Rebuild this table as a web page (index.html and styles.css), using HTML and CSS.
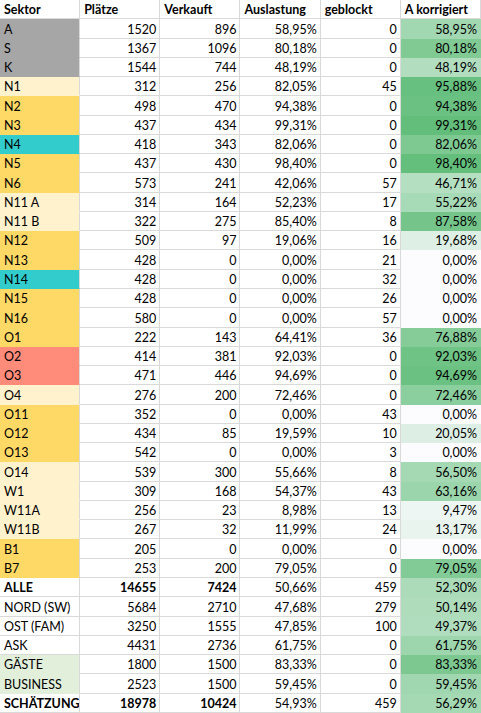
FILE: index.html
```html
<!DOCTYPE html>
<html lang="de">
<head>
<meta charset="utf-8">
<title>Sektoren</title>
<link rel="stylesheet" href="styles.css">
</head>
<body>
<div class="sheet">
  <div class="c b">Sektor</div><div class="c b">Plätze</div><div class="c b">Verkauft</div><div class="c b">Auslastung</div><div class="c b">geblockt</div><div class="c b">A korrigiert</div>

  <div class="c gray">A</div><div class="c n">1520</div><div class="c n">896</div><div class="c n">58,95%</div><div class="c n">0</div><div class="c n g" style="background:rgb(161,215,177)">58,95%</div>
  <div class="c gray">S</div><div class="c n">1367</div><div class="c n">1096</div><div class="c n">80,18%</div><div class="c n">0</div><div class="c n g" style="background:rgb(129,202,148)">80,18%</div>
  <div class="c gray">K</div><div class="c n">1544</div><div class="c n">744</div><div class="c n">48,19%</div><div class="c n">0</div><div class="c n g" style="background:rgb(178,222,191)">48,19%</div>
  <div class="c ly">N1</div><div class="c n">312</div><div class="c n">256</div><div class="c n">82,05%</div><div class="c n">45</div><div class="c n g" style="background:rgb(104,192,128)">95,88%</div>
  <div class="c yl">N2</div><div class="c n">498</div><div class="c n">470</div><div class="c n">94,38%</div><div class="c n">0</div><div class="c n g" style="background:rgb(107,193,130)">94,38%</div>
  <div class="c yl">N3</div><div class="c n">437</div><div class="c n">434</div><div class="c n">99,31%</div><div class="c n">0</div><div class="c n g" style="background:rgb(99,190,123)">99,31%</div>
  <div class="c teal">N4</div><div class="c n">418</div><div class="c n">343</div><div class="c n">82,06%</div><div class="c n">0</div><div class="c n g" style="background:rgb(126,201,146)">82,06%</div>
  <div class="c yl">N5</div><div class="c n">437</div><div class="c n">430</div><div class="c n">98,40%</div><div class="c n">0</div><div class="c n g" style="background:rgb(100,191,124)">98,40%</div>
  <div class="c yl">N6</div><div class="c n">573</div><div class="c n">241</div><div class="c n">42,06%</div><div class="c n">57</div><div class="c n g" style="background:rgb(180,223,193)">46,71%</div>
  <div class="c ly">N11 A</div><div class="c n">314</div><div class="c n">164</div><div class="c n">52,23%</div><div class="c n">17</div><div class="c n g" style="background:rgb(167,218,182)">55,22%</div>
  <div class="c ly">N11 B</div><div class="c n">322</div><div class="c n">275</div><div class="c n">85,40%</div><div class="c n">8</div><div class="c n g" style="background:rgb(117,197,139)">87,58%</div>
  <div class="c yl">N12</div><div class="c n">509</div><div class="c n">97</div><div class="c n">19,06%</div><div class="c n">16</div><div class="c n g" style="background:rgb(222,240,229)">19,68%</div>
  <div class="c yl">N13</div><div class="c n">428</div><div class="c n">0</div><div class="c n">0,00%</div><div class="c n">21</div><div class="c n g" style="background:rgb(252,252,255)">0,00%</div>
  <div class="c teal">N14</div><div class="c n">428</div><div class="c n">0</div><div class="c n">0,00%</div><div class="c n">32</div><div class="c n g" style="background:rgb(252,252,255)">0,00%</div>
  <div class="c yl">N15</div><div class="c n">428</div><div class="c n">0</div><div class="c n">0,00%</div><div class="c n">26</div><div class="c n g" style="background:rgb(252,252,255)">0,00%</div>
  <div class="c yl">N16</div><div class="c n">580</div><div class="c n">0</div><div class="c n">0,00%</div><div class="c n">57</div><div class="c n g" style="background:rgb(252,252,255)">0,00%</div>
  <div class="c yl">O1</div><div class="c n">222</div><div class="c n">143</div><div class="c n">64,41%</div><div class="c n">36</div><div class="c n g" style="background:rgb(134,204,153)">76,88%</div>
  <div class="c red">O2</div><div class="c n">414</div><div class="c n">381</div><div class="c n">92,03%</div><div class="c n">0</div><div class="c n g" style="background:rgb(110,195,133)">92,03%</div>
  <div class="c red">O3</div><div class="c n">471</div><div class="c n">446</div><div class="c n">94,69%</div><div class="c n">0</div><div class="c n g" style="background:rgb(106,193,129)">94,69%</div>
  <div class="c ly">O4</div><div class="c n">276</div><div class="c n">200</div><div class="c n">72,46%</div><div class="c n">0</div><div class="c n g" style="background:rgb(140,207,159)">72,46%</div>
  <div class="c yl">O11</div><div class="c n">352</div><div class="c n">0</div><div class="c n">0,00%</div><div class="c n">43</div><div class="c n g" style="background:rgb(252,252,255)">0,00%</div>
  <div class="c yl">O12</div><div class="c n">434</div><div class="c n">85</div><div class="c n">19,59%</div><div class="c n">10</div><div class="c n g" style="background:rgb(221,239,228)">20,05%</div>
  <div class="c yl">O13</div><div class="c n">542</div><div class="c n">0</div><div class="c n">0,00%</div><div class="c n">3</div><div class="c n g" style="background:rgb(252,252,255)">0,00%</div>
  <div class="c ly">O14</div><div class="c n">539</div><div class="c n">300</div><div class="c n">55,66%</div><div class="c n">8</div><div class="c n g" style="background:rgb(165,217,180)">56,50%</div>
  <div class="c ly">W1</div><div class="c n">309</div><div class="c n">168</div><div class="c n">54,37%</div><div class="c n">43</div><div class="c n g" style="background:rgb(155,213,171)">63,16%</div>
  <div class="c ly">W11A</div><div class="c n">256</div><div class="c n">23</div><div class="c n">8,98%</div><div class="c n">13</div><div class="c n g" style="background:rgb(237,246,242)">9,47%</div>
  <div class="c ly">W11B</div><div class="c n">267</div><div class="c n">32</div><div class="c n">11,99%</div><div class="c n">24</div><div class="c n g" style="background:rgb(232,244,237)">13,17%</div>
  <div class="c yl">B1</div><div class="c n">205</div><div class="c n">0</div><div class="c n">0,00%</div><div class="c n">0</div><div class="c n g" style="background:rgb(252,252,255)">0,00%</div>
  <div class="c yl">B7</div><div class="c n">253</div><div class="c n">200</div><div class="c n">79,05%</div><div class="c n">0</div><div class="c n g" style="background:rgb(130,203,150)">79,05%</div>
  <div class="c b">ALLE</div><div class="c n b">14655</div><div class="c n b">7424</div><div class="c n">50,66%</div><div class="c n">459</div><div class="c n g" style="background:rgb(171,219,185)">52,30%</div>
  <div class="c">NORD (SW)</div><div class="c n">5684</div><div class="c n">2710</div><div class="c n">47,68%</div><div class="c n">279</div><div class="c n g" style="background:rgb(175,221,188)">50,14%</div>
  <div class="c">OST (FAM)</div><div class="c n">3250</div><div class="c n">1555</div><div class="c n">47,85%</div><div class="c n">100</div><div class="c n g" style="background:rgb(176,221,189)">49,37%</div>
  <div class="c">ASK</div><div class="c n">4431</div><div class="c n">2736</div><div class="c n">61,75%</div><div class="c n">0</div><div class="c n g" style="background:rgb(157,213,173)">61,75%</div>
  <div class="c lg">GÄSTE</div><div class="c n">1800</div><div class="c n">1500</div><div class="c n">83,33%</div><div class="c n">0</div><div class="c n g" style="background:rgb(124,200,144)">83,33%</div>
  <div class="c lg">BUSINESS</div><div class="c n">2523</div><div class="c n">1500</div><div class="c n">59,45%</div><div class="c n">0</div><div class="c n g" style="background:rgb(160,215,176)">59,45%</div>
  <div class="c b">SCHÄTZUNG</div><div class="c n b">18978</div><div class="c n b">10424</div><div class="c n">54,93%</div><div class="c n">459</div><div class="c n g" style="background:rgb(165,217,180)">56,29%</div>
</div>
</body>
</html>
```
FILE: styles.css
```css
html, body {
  margin: 0;
  padding: 0;
  background: #ffffff;
}

.sheet {
  display: grid;
  grid-template-columns: repeat(6, 1fr);
  grid-auto-rows: 19.27px;
  width: 481px;
  font-family: Lato, "Open Sans", sans-serif;
  font-size: 12.5px;
  color: #000000;
}

.c {
  box-sizing: border-box;
  display: flex;
  align-items: flex-end;
  justify-content: flex-start;
  padding: 0 3px 1px 4px;
  line-height: 14px;
  white-space: nowrap;
  overflow: hidden;
  border-right: 1px solid #d9d9d9;
  border-bottom: 1px solid #d9d9d9;
}

.n {
  justify-content: flex-end;
}

.b {
  font-weight: 700;
}

.g {
  border-right-color: transparent;
  border-bottom-color: transparent;
}

.gray, .ly, .yl, .teal, .red, .lg {
  border-bottom-color: transparent;
}

.gray { background: #a6a6a6; }
.ly { background: #fff2cc; }
.yl { background: #ffd966; }
.teal { background: #33cccc; }
.red { background: #ff8b7b; }
.lg { background: #e2efda; }
```
